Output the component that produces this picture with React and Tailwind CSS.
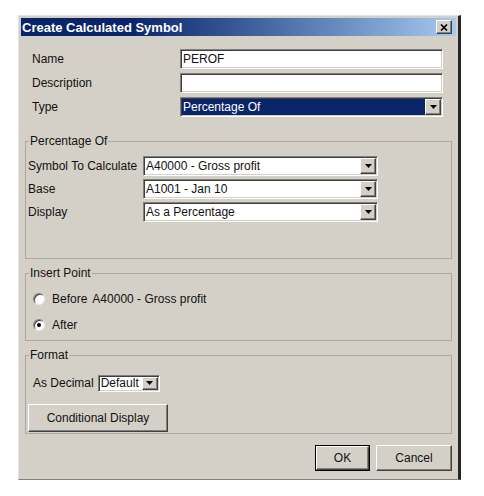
import React from 'react';

const sunken =
  'border border-t-[#808080] border-l-[#808080] border-r-white border-b-white shadow-[inset_1px_1px_0_#404040,inset_-1px_-1px_0_#d4d0c8]';
const raised =
  'border border-t-white border-l-white border-r-[#404040] border-b-[#404040] shadow-[inset_-1px_-1px_0_#808080] bg-[#d4d0c8]';

function Arrow() {
  return (
    <svg width="7" height="4" viewBox="0 0 7 4">
      <path d="M0 0h7L3.5 4z" fill="#000" />
    </svg>
  );
}

function DropButton() {
  return (
    <div className={`${raised} flex h-full w-[16px] shrink-0 items-center justify-center`}>
      <Arrow />
    </div>
  );
}

function TextBox({ value, className = '' }) {
  return (
    <div className={`${sunken} flex h-[20px] items-center bg-white p-[1px] pl-[2px] ${className}`}>
      <span className="leading-none">{value}</span>
    </div>
  );
}

function Select({ value, width, height = 'h-[20px]', dark = false }) {
  return (
    <div className={`${sunken} ${width} ${height} flex bg-white p-[1px]`}>
      <div
        className={`flex flex-1 items-center pl-[1px] leading-none ${
          dark ? 'bg-[#0a246a] text-white' : ''
        }`}
      >
        {value}
      </div>
      <DropButton />
    </div>
  );
}

function Radio({ checked, children }) {
  return (
    <div className="flex h-[20px] items-center">
      <div className="ml-[5px] flex h-[12px] w-[12px] items-center justify-center rounded-full border border-t-[#808080] border-l-[#808080] border-r-[#e8e8e8] border-b-[#e8e8e8] bg-white shadow-[inset_1px_1px_0_#404040]">
        {checked && <div className="h-[4px] w-[4px] rounded-full bg-black" />}
      </div>
      <div className="ml-[7px] flex gap-[5px]">{children}</div>
    </div>
  );
}

function Group({ title, className = '', children }) {
  return (
    <fieldset className={`border border-[#aaa8a2] px-[2px] ${className}`}>
      <legend className="ml-[1px] px-[1px] leading-[14px]">{title}</legend>
      {children}
    </fieldset>
  );
}

export default function App() {
  return (
    <div className="min-h-[496px] w-[484px] bg-white pl-[18px] pt-[15px] font-['Liberation_Sans',Arial,sans-serif] text-[12px] text-[#111]">
      <div className="w-[443px] border-t border-l border-r-[3px] border-b border-t-[#e4e2dc] border-l-[#e4e2dc] border-r-[#262626] border-b-[#808080] bg-[#d4d0c8] p-[2px] pb-[8px]">
        {/* Title bar */}
        <div className="flex h-[18px] items-center justify-between bg-linear-to-r from-[#0a246a] from-25% to-[#a6caf0] pl-[1px] pr-[4px]">
          <span className="text-[13px] font-bold leading-none text-white">Create Calculated Symbol</span>
          <div className={`${raised} flex h-[14px] w-[16px] items-center justify-center`}>
            <svg width="8" height="7" viewBox="0 0 8 7">
              <path d="M1 0.5l6 6M7 0.5l-6 6" stroke="#000" strokeWidth="1.6" />
            </svg>
          </div>
        </div>

        <div className="px-[4px]">
          {/* Top fields */}
          <div className="mt-[13px] grid grid-cols-[148px_263px] gap-y-[4px] pl-[7px]">
            <div className="flex items-center">Name</div>
            <TextBox value="PEROF" />
            <div className="flex items-center">Description</div>
            <TextBox value="" />
            <div className="flex items-center">Type</div>
            <Select value="Percentage Of" width="w-[263px]" dark />
          </div>

          <Group title="Percentage Of" className="mt-[17px] pb-[36px]">
            <div className="grid grid-cols-[115px_235px] gap-y-[3px] pt-[8px]">
              <div className="flex items-center">Symbol To Calculate</div>
              <Select value="A40000 - Gross profit" width="w-[235px]" />
              <div className="flex items-center">Base</div>
              <Select value="A1001 - Jan 10" width="w-[235px]" />
              <div className="flex items-center">Display</div>
              <Select value="As a Percentage" width="w-[235px]" />
            </div>
          </Group>

          <Group title="Insert Point" className="mt-[7px] pb-[5px]">
            <div className="flex flex-col gap-[6px] pt-[9px]">
              <Radio>
                <span>Before</span>
                <span>A40000 - Gross profit</span>
              </Radio>
              <Radio checked>
                <span>After</span>
              </Radio>
            </div>
          </Group>

          <Group title="Format" className="mt-[7px] pb-[1px]">
            <div className="flex items-center gap-[4px] pl-[5px] pt-[12px]">
              <span>As Decimal</span>
              <Select value="Default" width="w-[62px]" height="h-[17px]" />
            </div>
            <div className={`${raised} mt-[12px] flex h-[28px] w-[140px] items-center justify-center`}>
              Conditional Display
            </div>
          </Group>

          {/* Dialog buttons */}
          <div className="mt-[11px] flex justify-end gap-[6px]">
            <div className="border border-black">
              <div className={`${raised} flex h-[24px] w-[53px] items-center justify-center`}>OK</div>
            </div>
            <div className={`${raised} flex h-[26px] w-[76px] items-center justify-center`}>Cancel</div>
          </div>
        </div>
      </div>
    </div>
  );
}
